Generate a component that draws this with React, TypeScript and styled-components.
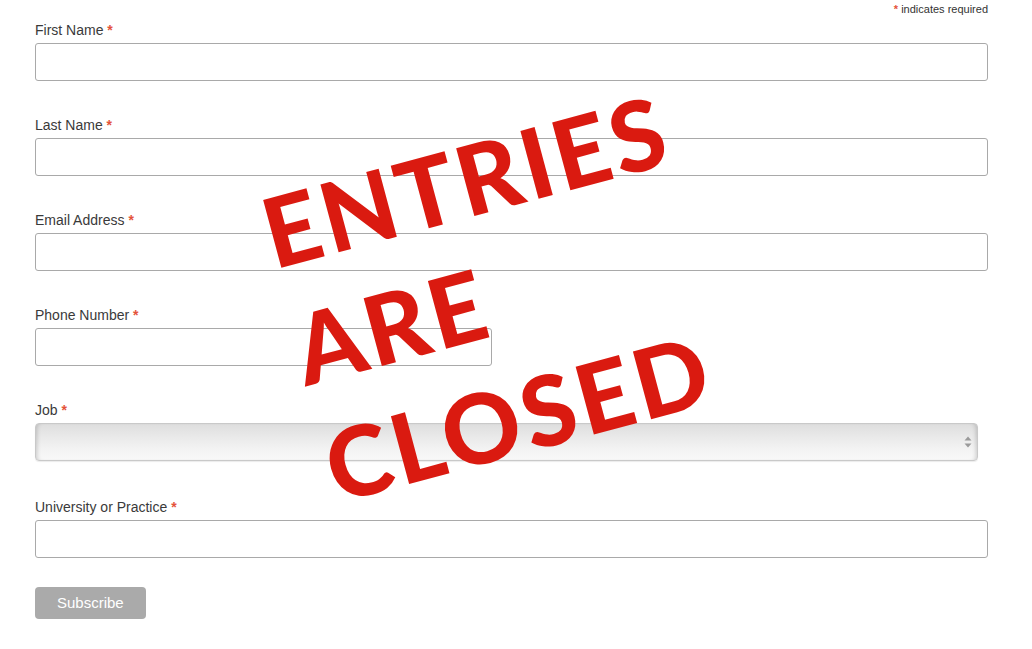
import React from 'react';
import styled, { createGlobalStyle } from 'styled-components';

const GlobalStyle = createGlobalStyle`
    html, body {
        margin: 0;
        padding: 0;
        background: #fff;
    }
    body {
        font-family: "Liberation Sans", Helvetica, Arial, sans-serif;
        color: #333;
    }
`

interface FieldDef {
    name: string
    label: string
    width?: number
}

const fields: FieldDef[] = [
    { name: "FNAME", label: "First Name" },
    { name: "LNAME", label: "Last Name" },
    { name: "EMAIL", label: "Email Address" },
    { name: "PHONE", label: "Phone Number", width: 457 },
]

function App() {
    return (
        <>
            <GlobalStyle />
            <Page>
                <Form onSubmit={e => e.preventDefault()}>
                    <Required><Asterisk>*</Asterisk> indicates required</Required>
                    {fields.map(f => (
                        <Group key={f.name}>
                            <Label htmlFor={f.name}>{f.label} <Asterisk>*</Asterisk></Label>
                            <Input type="text" id={f.name} name={f.name} $width={f.width} />
                        </Group>
                    ))}
                    <Group $extra={2}>
                        <Label htmlFor="JOB">Job <Asterisk>*</Asterisk></Label>
                        <SelectWrap>
                            <Select id="JOB" name="JOB" defaultValue="">
                                <option value=""></option>
                            </Select>
                            <Arrows width="8" height="14" viewBox="0 0 8 14">
                                <path d="M4 1.5 L7.5 5.5 L0.5 5.5 Z" fill="#9a9a9a" />
                                <path d="M4 12.5 L7.5 8.5 L0.5 8.5 Z" fill="#9a9a9a" />
                            </Arrows>
                        </SelectWrap>
                    </Group>
                    <Group $gap={29}>
                        <Label htmlFor="UNI">University or Practice <Asterisk>*</Asterisk></Label>
                        <Input type="text" id="UNI" name="UNI" />
                    </Group>
                    <Button type="submit">Subscribe</Button>
                </Form>
                <Stamp>
                    <StampLine>ENTRIES</StampLine>
                    <StampLine>ARE</StampLine>
                    <StampLine>CLOSED</StampLine>
                </Stamp>
            </Page>
        </>
    );
}

const Page = styled.div`
    position: relative;
    width: 1032px;
    height: 649px;
    overflow: hidden;
`

const Form = styled.form`
    display: flex;
    flex-direction: column;
    align-items: flex-start;
    padding-left: 35px;
    width: 953px;
`

const Required = styled.div`
    align-self: flex-end;
    padding-top: 3px;
    margin-bottom: 6px;
    font-size: 11px;
    line-height: 13px;
    color: #333;
`

const Asterisk = styled.span`
    color: #e4533a;
    font-weight: 700;
`

const Group = styled.div<{ $extra?: number, $gap?: number }>`
    display: flex;
    flex-direction: column;
    align-self: stretch;
    margin-bottom: ${p => p.$gap ?? (36 + (p.$extra || 0))}px;
`

const Label = styled.label`
    display: block;
    font-size: 14px;
    line-height: 16px;
    color: #3a3a3a;
    margin-bottom: 5px;
`

const Input = styled.input<{ $width?: number }>`
    box-sizing: border-box;
    display: block;
    width: ${p => p.$width ? `${p.$width}px` : '100%'};
    height: 38px;
    margin: 0;
    padding: 0 8px;
    border: 1px solid #a9a9a9;
    border-radius: 3px;
    background: #fff;
    font-size: 15px;
    outline: none;
`

const SelectWrap = styled.div`
    position: relative;
    width: 943px;
    height: 38px;
`

const Select = styled.select`
    appearance: none;
    -webkit-appearance: none;
    box-sizing: border-box;
    width: 100%;
    height: 100%;
    margin: 0;
    border: 1px solid #c9c9c9;
    border-radius: 4px;
    background: linear-gradient(to bottom, #dedede 0%, #e9e9e9 35%, #f3f3f3 70%, #f8f8f8 100%);
    box-shadow: inset 4px 0 4px -3px rgba(0, 0, 0, 0.18), inset -4px 0 4px -3px rgba(0, 0, 0, 0.18), 0 1px 1px rgba(0, 0, 0, 0.08);
    outline: none;
`

const Arrows = styled.svg`
    position: absolute;
    right: 6px;
    top: 12px;
    pointer-events: none;
`

const Button = styled.button`
    height: 32px;
    line-height: 32px;
    padding: 0 22px;
    margin: 0;
    border: 0;
    border-radius: 4px;
    background-color: #aaa;
    color: #fff;
    font-family: "Liberation Sans", Helvetica, Arial, sans-serif;
    font-size: 15px;
    cursor: pointer;
`

const Stamp = styled.div`
    position: absolute;
    left: 249px;
    top: 175px;
    transform: rotate(-15deg);
    transform-origin: 0 0;
    pointer-events: none;
    display: flex;
    flex-direction: column;
    align-items: flex-start;
`

const StampLine = styled.div`
    font-family: Lato, "Open Sans", sans-serif;
    font-weight: 900;
    font-size: 97px;
    line-height: 121px;
    color: #da1a10;
    white-space: nowrap;
    letter-spacing: 3.5px;
`

export default App;
